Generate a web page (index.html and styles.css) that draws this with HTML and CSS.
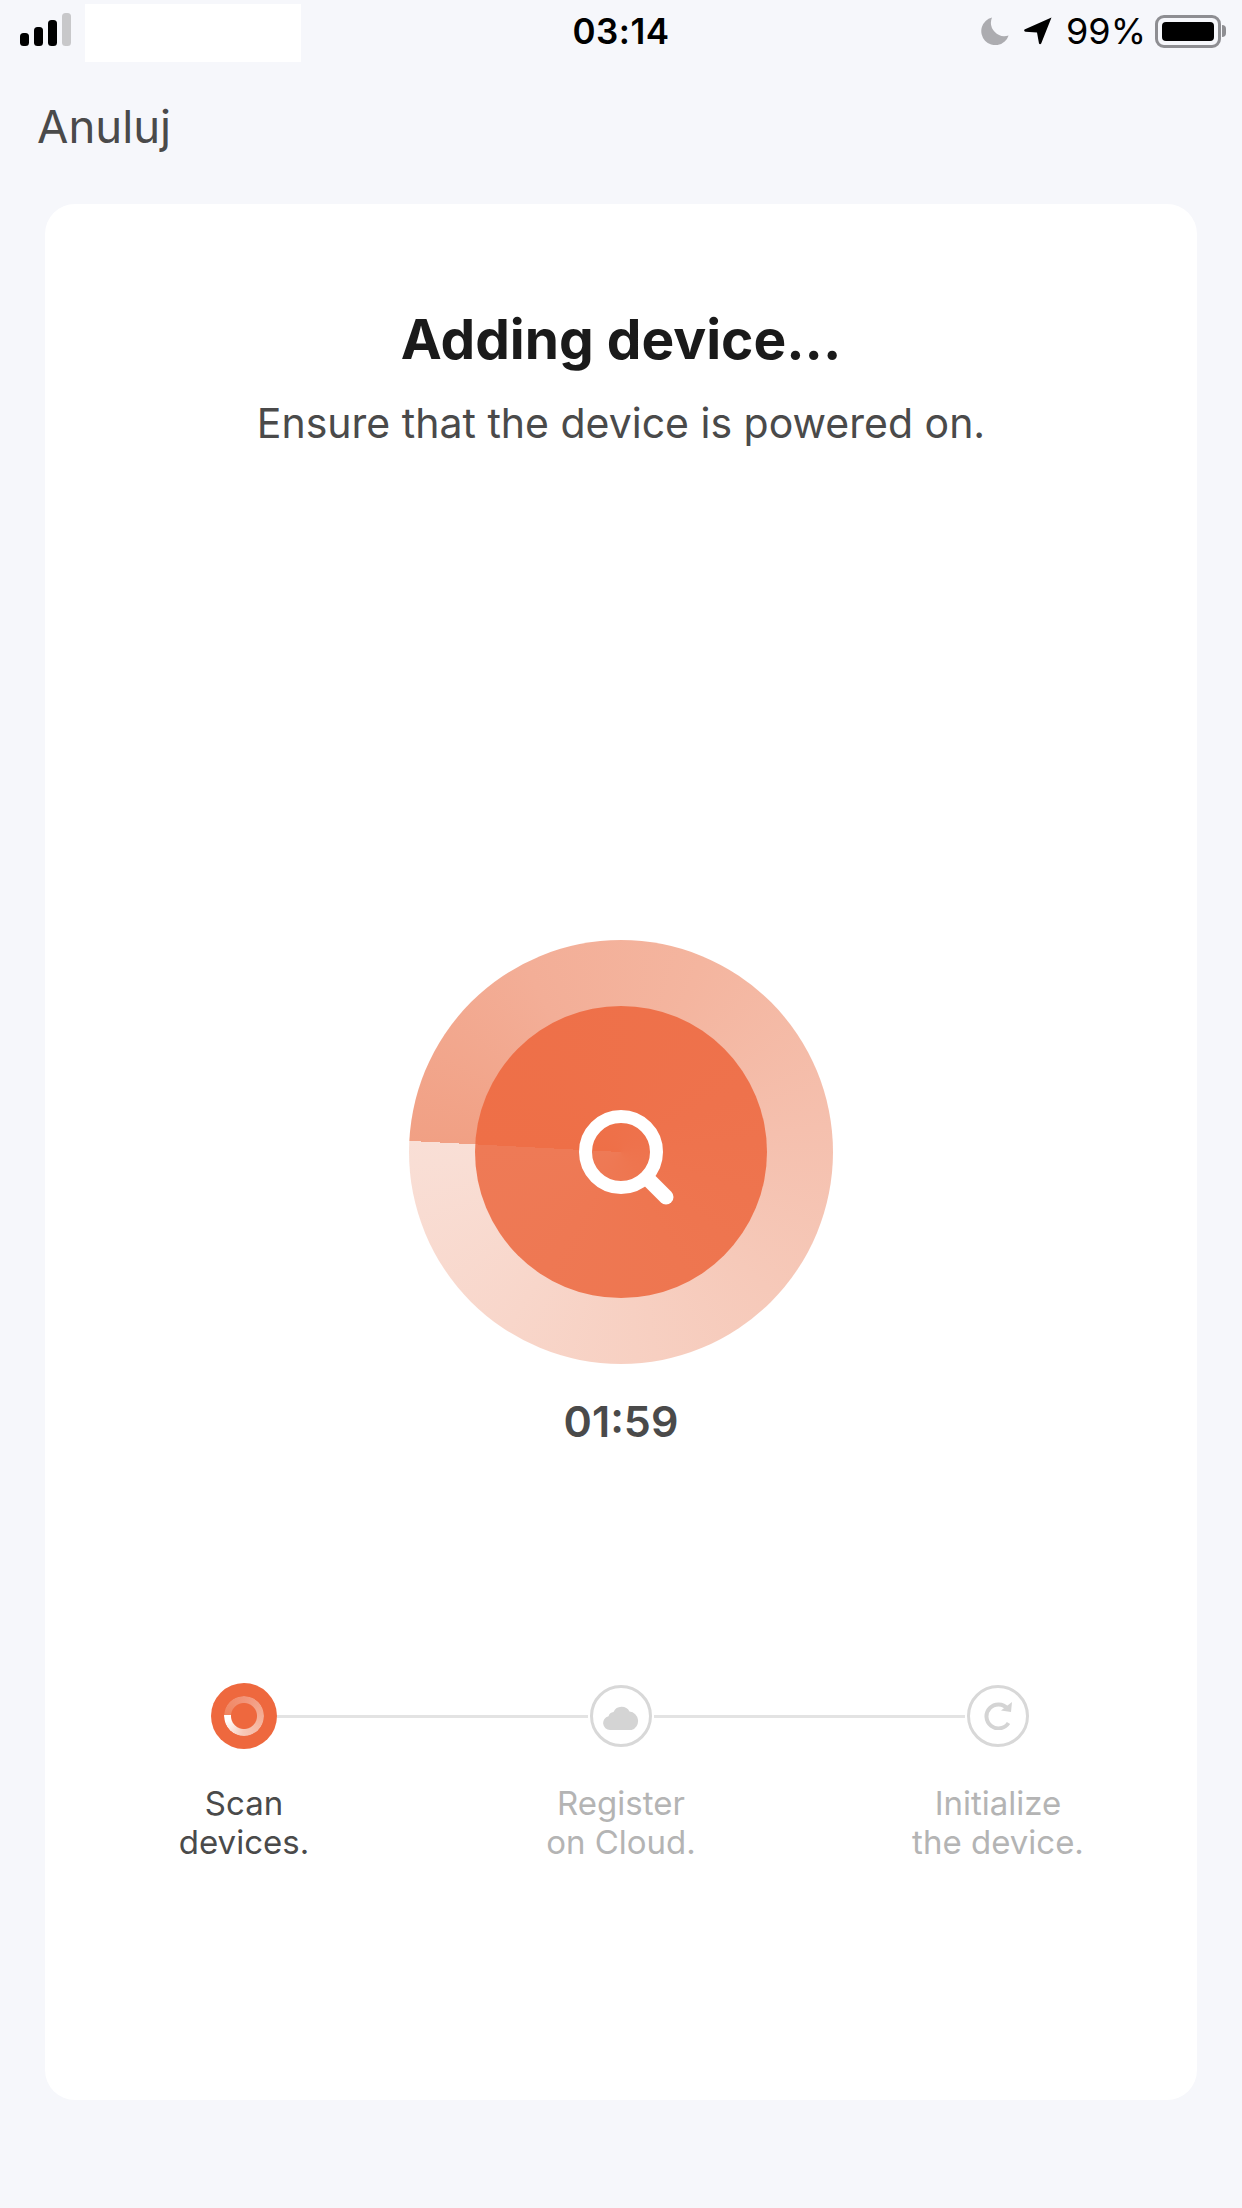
FILE: index.html
```html
<!DOCTYPE html>
<html lang="en">
<head>
    <meta charset="UTF-8">
    <meta name="viewport" content="width=device-width, initial-scale=1.0">
    <title>Adding device</title>
    <link rel="stylesheet" href="styles.css">
</head>

<body>
    <!-- Status Bar -->
    <div class="status-bar">
        <div class="status-left">
            <svg class="signal" width="52" height="33" viewBox="0 0 52 33">
                <rect x="0" y="20" width="9" height="13" rx="3.5" fill="#000"/>
                <rect x="14" y="14" width="9" height="19" rx="3.5" fill="#000"/>
                <rect x="28" y="7" width="9" height="26" rx="3.5" fill="#000"/>
                <rect x="42" y="0" width="9" height="33" rx="3.5" fill="#c8c8ca"/>
            </svg>
            <div class="carrier"></div>
        </div>
        <div class="status-time">03:14</div>
        <div class="status-right">
            <svg width="28" height="28" viewBox="0 0 28 28">
                <path d="M11 0.5 A14 14 0 1 0 27.6 18.4 A13.5 13.5 0 0 1 11 0.5 Z" fill="#acacb0"/>
            </svg>
            <svg class="arrow" width="28" height="28" viewBox="0 0 28 28">
                <path d="M27.5 0.5 L0.5 12.5 Q-0.5 14 1.5 14.8 L13 15.5 L15 26.5 Q16 28 17.2 26.6 Z" fill="#000"/>
            </svg>
            <span class="battery-pct">99%</span>
            <div class="battery">
                <div class="battery-body"><div class="battery-fill"></div></div>
                <div class="battery-cap"></div>
            </div>
        </div>
    </div>

    <!-- Nav -->
    <div class="nav"><span class="cancel">Anuluj</span></div>

    <!-- Card -->
    <main class="card">
        <h1 class="title">Adding device...</h1>
        <p class="subtitle">Ensure that the device is powered on.</p>

        <div class="radar">
            <div class="radar-inner">
                <svg class="search" width="140" height="140" viewBox="0 0 140 140">
                    <circle cx="70" cy="70" r="35.500" fill="none" stroke="#fff" stroke-width="13"/>
                    <path d="M97 97 L115 115" fill="none" stroke="#fff" stroke-width="15" stroke-linecap="round"/>
                </svg>
            </div>
        </div>
        <div class="timer">01:59</div>

        <!-- Steps -->
        <div class="track">
            <div class="dot dot-active">
                <div class="spinner"></div>
            </div>
            <div class="line"></div>
            <div class="dot">
                <svg width="36" height="28" viewBox="0 0 36 28">
                    <path d="M7 28 A7 7 0 0 1 5.500 14.200 A6 6 0 0 1 10.500 10 A9 9 0 0 1 26.500 9.500 A9.500 9.500 0 0 1 28.500 28 Z" fill="#d4d4d4"/>
                </svg>
            </div>
            <div class="line"></div>
            <div class="dot">
                <svg width="28" height="28" viewBox="0 0 28 28">
                    <path d="M23.500 6.500 A12 12 0 1 0 24.500 21" fill="none" stroke="#d4d4d4" stroke-width="4"/>
                    <path d="M28 0 L27 10 L17 8.500 Z" fill="#d4d4d4"/>
                </svg>
            </div>
        </div>
        <div class="labels">
            <div class="label label-active">Scan<br>devices.</div>
            <div class="label">Register<br>on Cloud.</div>
            <div class="label">Initialize<br>the device.</div>
        </div>
    </main>
</body>
</html>
```

FILE: styles.css
```css
/* General Styles */
* {
    box-sizing: border-box;
}

body {
    font-family: Inter, "Liberation Sans", sans-serif;
    margin: 0;
    padding: 0;
    width: 1242px;
    height: 2208px;
    overflow: hidden;
    background-color: #f6f7fb;
    color: #4a4a4a;
}

/* Status Bar */
.status-bar {
    height: 62px;
    display: grid;
    grid-template-columns: 1fr auto 1fr;
    align-items: center;
}

.status-left {
    display: flex;
    align-items: flex-start;
    height: 62px;
    padding: 4px 0 0 20px;
}

.signal {
    margin-top: 9px;
}

.carrier {
    width: 216px;
    height: 58px;
    margin-left: 13px;
    background-color: #fff;
}

.status-time {
    font-size: 35px;
    font-weight: 600;
    color: #000;
    letter-spacing: 0.5px;
}

.status-right {
    display: flex;
    justify-content: flex-end;
    align-items: center;
    padding-right: 16px;
}

.arrow {
    margin-left: 15px;
}

.battery-pct {
    margin-left: 14px;
    font-size: 36px;
    color: #000;
}

.battery {
    display: flex;
    align-items: center;
    margin-left: 9px;
}

.battery-body {
    width: 66px;
    height: 33px;
    padding: 4px;
    border: 3px solid #8e8e92;
    border-radius: 9px;
}

.battery-fill {
    width: 100%;
    height: 100%;
    background-color: #000;
    border-radius: 4px;
}

.battery-cap {
    width: 4px;
    height: 12px;
    margin-left: 1px;
    background-color: #8e8e92;
    border-radius: 0 6px 6px 0;
}

/* Nav */
.nav {
    height: 142px;
    padding: 38px 0 0 37px;
}

.cancel {
    font-size: 45.500px;
    line-height: 54px;
    color: #4a4a4a;
}

/* Card */
.card {
    width: 1152px;
    height: 1896px;
    margin: 0 auto;
    background-color: #fff;
    border-radius: 30px;
    padding-top: 100px;
    text-align: center;
}

.title {
    margin: 0;
    font-size: 55px;
    line-height: 70px;
    font-weight: 700;
    color: #1a1a1a;
}

.subtitle {
    margin: 24px 0 0;
    font-size: 41px;
    line-height: 50px;
    color: #4a4a4a;
}

/* Radar */
.radar {
    width: 424px;
    height: 424px;
    margin: 492px auto 0;
    border-radius: 50%;
    background: conic-gradient(from 273deg, #f1a084 0deg, #f3ae97 60deg, #f4b59f 110deg, #f5c0ae 170deg, #f6c9b9 220deg, #f8d6ca 300deg, #f9dfd6 360deg);
    display: flex;
    align-items: center;
    justify-content: center;
}

.radar-inner {
    width: 292px;
    height: 292px;
    border-radius: 50%;
    background: conic-gradient(from 273deg, #ee6f47 0deg, #ee724c 150deg, #ee7650 240deg, #ee7a56 360deg);
    display: flex;
    align-items: center;
    justify-content: center;
}

.timer {
    margin-top: 32px;
    font-size: 43px;
    line-height: 50px;
    font-weight: 600;
    color: #4a4a4a;
}

/* Steps */
.track {
    display: flex;
    align-items: center;
    height: 66px;
    margin-top: 237px;
    padding: 0 168px 0 166px;
}

.line {
    flex: 1;
    height: 3px;
    margin: 0 2px;
    background-color: #e3e3e3;
}

.dot {
    width: 62px;
    height: 62px;
    border: 3px solid #d8d8d8;
    border-radius: 50%;
    display: flex;
    align-items: center;
    justify-content: center;
}

.dot-active {
    width: 66px;
    height: 66px;
    margin-right: -2px;
    border: none;
    background-color: #ee683e;
}

.spinner {
    width: 40px;
    height: 40px;
    border-radius: 50%;
    background: conic-gradient(from 273deg, #f0845f 0deg, #f2957a 90deg, #f4ac93 170deg, #f7c8b7 270deg, #ffffff 345deg, #fff 360deg);
    -webkit-mask: radial-gradient(circle, transparent 12.500px, #000 13.500px);
    mask: radial-gradient(circle, transparent 12.500px, #000 13.500px);
}

.labels {
    display: grid;
    grid-template-columns: repeat(3, 377px);
    justify-content: center;
    margin-top: 35px;
}

.label {
    font-size: 33px;
    line-height: 39px;
    color: #b4b4b4;
}

.label-active {
    color: #4a4a4a;
}
```
